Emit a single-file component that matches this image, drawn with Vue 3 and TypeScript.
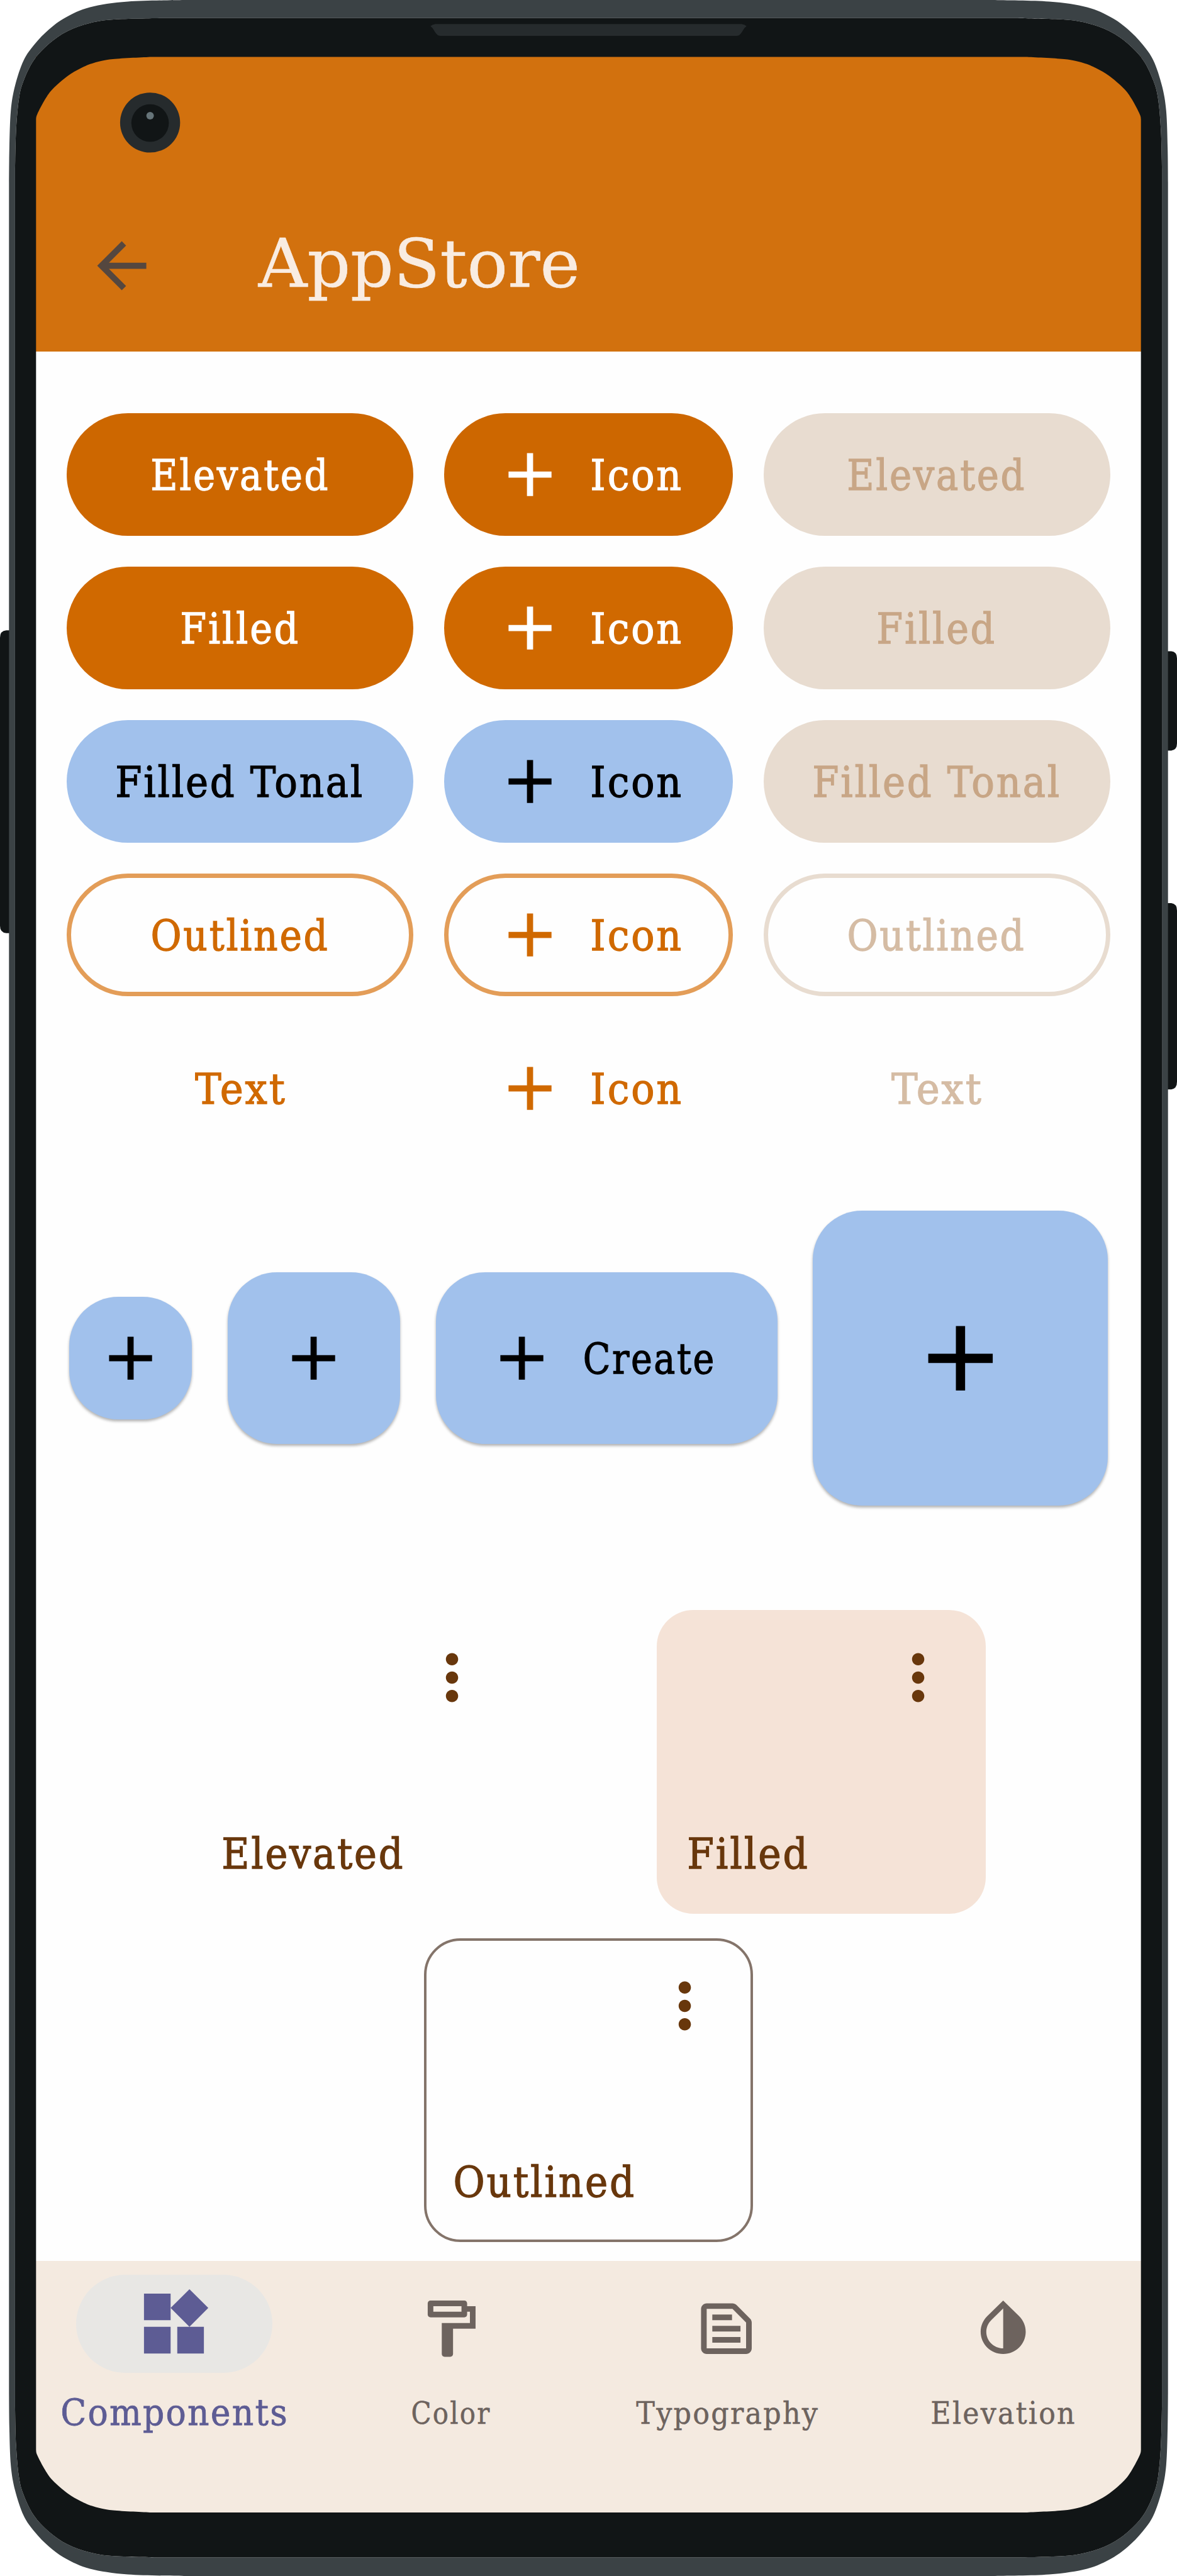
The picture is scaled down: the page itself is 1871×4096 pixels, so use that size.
<script setup lang="ts">
import { h, type FunctionalComponent } from 'vue'

interface LabelProps {
  text: string
  /** drawn width in px */
  w: number
  /** capital height in px */
  cap?: number
  size?: number
  /** extra stem thickness in px */
  bold?: number
  track?: number
}

// Side bearing of the first letter, in em.
const leading: Record<string, number> = { E: 0.055, F: 0.055, O: 0.052, C: 0.05, I: 0.055, T: 0.015, A: -0.008 }

// Text whose box is exactly its capital height, so flex centring is optical.
const Label: FunctionalComponent<LabelProps> = ({ text, w, cap = 48.6, size = 66.6, bold = 1.3, track = 3 }) => {
  const left = size * (leading[text[0]] ?? 0.05)
  const right = size * 0.03 + track
  return h('svg', { width: w, height: cap, style: { overflow: 'visible', display: 'block', flex: 'none' } }, [
    h('text', {
      x: -left,
      y: cap,
      textLength: w + left + right,
      lengthAdjust: 'spacingAndGlyphs',
      fill: 'currentColor',
      stroke: 'currentColor',
      'stroke-width': bold,
      'letter-spacing': track,
      'font-family': "'Roboto Slab', 'DejaVu Serif', serif",
      'font-size': size,
    }, text),
  ])
}
Label.props = ['text', 'w', 'cap', 'size', 'bold', 'track']

const Icon: FunctionalComponent<{ d: string; size?: number }> = ({ d, size = 117.1 }) =>
  h('svg', { width: size, height: size, viewBox: '0 0 24 24', style: { display: 'block', flex: 'none' } }, [
    h('path', { d, fill: 'currentColor' }),
  ])
Icon.props = ['d', 'size']

const icons = {
  back: 'M20 11H7.83l5.59-5.59L12 4l-8 8 8 8 1.41-1.41L7.83 13H20v-2z',
  add: 'M19 13h-6v6h-2v-6H5v-2h6V5h2v6h6v2z',
  more: 'M12 8c1.1 0 2-.9 2-2s-.9-2-2-2-2 .9-2 2 .9 2 2 2zm0 2c-1.1 0-2 .9-2 2s.9 2 2 2 2-.9 2-2-.9-2-2-2zm0 6c-1.1 0-2 .9-2 2s.9 2 2 2 2-.9 2-2-.9-2-2-2z',
  widgets: 'M13 13v8h8v-8h-8zM3 21h8v-8H3v8zM3 3v8h8V3H3zm13.66-1.31L11 7.34 16.66 13l5.66-5.66-5.66-5.65z',
  paint: 'M18 4V3c0-.55-.45-1-1-1H5c-.55 0-1 .45-1 1v4c0 .55.45 1 1 1h12c.55 0 1-.45 1-1V6h1v4H9v11c0 .55.45 1 1 1h2c.55 0 1-.45 1-1v-9h8V4h-3zm-2 2H6V4h10v2z',
  snippet: 'M14.17 5L19 9.83V19H5V5h9.17M14.17 3H5c-1.1 0-2 .9-2 2v14c0 1.1.9 2 2 2h14c1.1 0 2-.9 2-2V9.83c0-.53-.21-1.04-.59-1.41l-4.83-4.83c-.37-.38-.88-.59-1.41-.59zM7 15h10v2H7v-2zm0-4h10v2H7v-2zm0-4h7v2H7V7z',
  invert: 'M12 4.81V19c-3.31 0-6-2.63-6-5.87 0-1.56.62-3.03 1.75-4.14L12 4.81M12 2L6.35 7.56C4.9 8.99 4 10.96 4 13.13 4 17.48 7.58 21 12 21s8-3.52 8-7.87c0-2.17-.9-4.14-2.35-5.57L12 2z',
}

const rows = [
  { kind: 'elevated', text: 'Elevated', w: 276.2 },
  { kind: 'filled', text: 'Filled', w: 182 },
  { kind: 'tonal', text: 'Filled Tonal', w: 387 },
  { kind: 'outlined', text: 'Outlined', w: 275.6 },
  { kind: 'text', text: 'Text', w: 139.6 },
]

const cards = [
  { kind: 'elevated', text: 'Elevated', w: 282.2 },
  { kind: 'filled', text: 'Filled', w: 185.6 },
  { kind: 'outlined', text: 'Outlined', w: 282 },
]

const tabs = [
  { text: 'Components', icon: icons.widgets, w: 356, active: true },
  { text: 'Color', icon: icons.paint, w: 120.5, active: false },
  { text: 'Typography', icon: icons.snippet, w: 286.4, active: false },
  { text: 'Elevation', icon: icons.invert, w: 225, active: false },
]

type Pt = [number, number]

// Closed outline with four mirrored corners, each a Catmull-Rom curve through the offsets.
function outline(x0: number, y0: number, x1: number, y1: number, corner: Pt[]): string {
  const tl = corner.map(([x, y]): Pt => [x0 + x, y0 + y])
  const flip = (p: Pt[], fx: boolean, fy: boolean) =>
    p.map(([x, y]): Pt => [fx ? x0 + x1 - x : x, fy ? y0 + y1 - y : y])
  const parts = [tl, flip(tl, true, false).reverse(), flip(tl, true, true), flip(tl, false, true).reverse()]
  return parts.map((p, k) => {
    let d = `${k ? 'L' : 'M'}${p[0][0]} ${p[0][1]}`
    for (let i = 0; i < p.length - 1; i++) {
      const a = p[Math.max(i - 1, 0)], b = p[i], c = p[i + 1], e = p[Math.min(i + 2, p.length - 1)]
      d += `C${b[0] + (c[0] - a[0]) / 6} ${b[1] + (c[1] - a[1]) / 6} ${c[0] - (e[0] - b[0]) / 6} ${c[1] - (e[1] - b[1]) / 6} ${c[0]} ${c[1]}`
    }
    return d
  }).join('') + 'Z'
}

const shell = outline(14.3, 0, 1856.7, 4096, [[0, 290], [0.6, 235], [2.9, 176], [9.7, 136], [23.3, 96], [41, 70], [63.3, 47], [89.7, 28], [128.7, 11.5], [189, 2.5], [278, 0]])
const bezel = outline(23.9, 28.7, 1847.1, 4066.6, [[0, 240], [1.6, 180], [6.1, 129], [13.5, 100], [29.8, 67], [53.7, 41], [83, 21], [119, 8], [157, 2.3], [232, 0]])
const glass = outline(57.3, 90.4, 1813.7, 3995, [[0, 99.3], [2, 91], [14.3, 67.7], [26.5, 51], [50, 30.5], [71, 18], [92, 9.5], [122, 3.5], [183, 0]])
</script>

<template>
  <div class="stage">
    <div class="screen">
      <header class="appbar">
        <Icon :d="icons.back" class="back" />
        <Label class="title" text="AppStore" :w="508.9" :cap="77.2" :size="105.9" :bold="0.6" :track="0" />
      </header>

      <main class="body">
        <section class="buttons">
          <template v-for="r in rows" :key="r.kind">
            <div class="btn" :class="r.kind"><Label :text="r.text" :w="r.w" /></div>
            <div class="btn" :class="r.kind"><Icon :d="icons.add" /><Label class="after" text="Icon" :w="139" /></div>
            <div class="btn disabled" :class="r.kind"><Label :text="r.text" :w="r.w" /></div>
          </template>
        </section>

        <section class="fabs">
          <div class="fab small"><Icon :d="icons.add" /></div>
          <div class="fab"><Icon :d="icons.add" /></div>
          <div class="fab wide"><Icon :d="icons.add" /><Label class="after" text="Create" :w="203" /></div>
          <div class="fab large"><Icon :d="icons.add" :size="175.7" /></div>
        </section>

        <section class="cards">
          <article v-for="c in cards" :key="c.kind" class="card" :class="c.kind">
            <Icon :d="icons.more" class="more" />
            <Label :text="c.text" :w="c.w" />
          </article>
        </section>
      </main>

      <nav class="tabs">
        <div v-for="t in tabs" :key="t.text" class="tab" :class="{ active: t.active }">
          <div class="slot"><Icon :d="t.icon" :size="t.active ? 127 : 107.4" /></div>
          <Label
            :text="t.text"
            :w="t.w"
            :cap="t.active ? 41.6 : 34.8"
            :size="t.active ? 57.2 : 47.8"
            :bold="t.active ? 0.8 : 0.5"
            :track="2.4"
          />
        </div>
      </nav>
    </div>

    <svg class="device" width="1871" height="4096" viewBox="0 0 1871 4096">
      <g fill="#111516">
        <path d="M15 1002.3H10Q0 1003 0 1014V1472Q0 1483 10 1483.7H15z" />
        <path d="M1856 1035.6H1862Q1871 1036.500 1871 1047V1182Q1871 1192.500 1862 1193.500H1856z" />
        <path d="M1856 1436H1862Q1871 1437 1871 1448V1720Q1871 1731 1862 1732.300H1856z" />
      </g>
      <path :d="shell + bezel" fill="#3b4245" fill-rule="evenodd" />
      <path :d="bezel + glass" fill="#111516" fill-rule="evenodd" />
      <path d="M692 38.200H1179Q1184 39 1186.700 41.500C1181 46 1181 50 1177 54Q1175 57 1171 57H700Q696 57 694 54C690 50 690 46 684.300 41.500Q687 39 692 38.200z" fill="#262b2d" />
      <circle cx="238.600" cy="194.900" r="47.700" fill="#262b2d" />
      <circle cx="238.600" cy="195.600" r="29.800" fill="#111516" />
      <circle cx="238.600" cy="183.900" r="6" fill="#667479" />
    </svg>
  </div>
</template>

<style>
body {
  margin: 0;
  background: #fff;
}
</style>

<style scoped>
.stage {
  position: relative;
  width: 1871px;
  height: 4096px;
  overflow: hidden;
  font-family: 'Roboto Slab', 'DejaVu Serif', serif;
}
.device {
  position: absolute;
  inset: 0;
  display: block;
}
.screen {
  box-sizing: border-box;
  width: 1756.8px;
  height: 3906px;
  margin: 90px 57.1px 0;
  display: flex;
  flex-direction: column;
  background: #fefefe;
}
.stage::before {
  content: '';
  display: table;
}
.appbar {
  box-sizing: border-box;
  height: 469px;
  flex: none;
  display: flex;
  align-items: flex-end;
  padding: 0 0 78px 78px;
  background: #d2710e;
  color: #f9ece1;
}
.back {
  color: #55473f;
  margin-right: 157.7px;
}
.title {
  margin-bottom: 24.8px;
}
.body {
  flex: 1;
  padding-top: 97.8px;
}
.buttons {
  display: grid;
  grid-template-columns: 551.2px 458.8px 551.2px;
  grid-auto-rows: 195.2px;
  gap: 48.8px;
  justify-content: center;
}
.btn {
  box-sizing: border-box;
  display: flex;
  align-items: center;
  justify-content: center;
  border-radius: 97.6px;
}
.btn:nth-child(3n + 1),
.btn:nth-child(3n) {
  padding-right: 2px;
}
.btn:nth-child(3n + 2) {
  justify-content: flex-start;
  padding-left: 77.8px;
}
.after {
  margin-left: 41.3px;
}
.btn.elevated {
  background: #cd6700;
  color: #fff;
}
.btn.filled {
  background: #d06900;
  color: #fff;
}
.btn.tonal {
  background: #a1c1ec;
  color: #000;
}
.btn.outlined {
  border: 7.3px solid #e39d58;
  color: #d06900;
}
.btn.outlined:nth-child(3n + 2) {
  padding-left: 70.8px;
}
.btn.text {
  color: #d06900;
}
.btn.disabled {
  background: #e8dcd0;
  color: #c8a686;
}
.btn.disabled.outlined,
.btn.disabled.text {
  background: none;
  border-color: #e8dcd0;
  color: #d5bca4;
}
.fabs {
  display: flex;
  align-items: center;
  justify-content: space-between;
  height: 469px;
  margin-top: 97px;
  padding: 0 52.6px;
}
.fab {
  display: flex;
  align-items: center;
  justify-content: center;
  width: 274px;
  height: 273.5px;
  border-radius: 78px;
  background: #a1c1ec;
  color: #000;
  box-shadow: 0 3px 4px rgba(0, 0, 0, 0.3);
}
.fab.small {
  width: 195.6px;
  height: 195.6px;
}
.fab.wide {
  box-sizing: border-box;
  width: 543px;
  justify-content: flex-start;
  padding-left: 78.5px;
}
.fab.large {
  width: 469px;
  height: 469px;
}
.cards {
  display: flex;
  flex-wrap: wrap;
  justify-content: center;
  gap: 39px 218px;
  margin-top: 166.2px;
  padding: 0 240px;
}
.card {
  box-sizing: border-box;
  width: 522.2px;
  height: 483px;
  display: flex;
  flex-direction: column;
  justify-content: space-between;
  padding: 48.8px 49px 73px 51.8px;
  border-radius: 58px;
  color: #68370c;
}
.more {
  align-self: flex-end;
}
.card.filled {
  background: #f5e3d7;
}
.card.outlined {
  border: 4.5px solid #84746a;
  padding: 44.8px 45px 69px 46px;
}
.tabs {
  box-sizing: border-box;
  height: 401.5px;
  flex: none;
  display: flex;
  padding-top: 22.5px;
  background: #f4eae0;
  color: #6d635e;
}
.tab {
  flex: 1;
  display: flex;
  flex-direction: column;
  align-items: center;
}
.slot {
  box-sizing: border-box;
  width: 312px;
  height: 155.6px;
  margin-bottom: 46.4px;
  padding-top: 15px;
  display: flex;
  align-items: center;
  justify-content: center;
  border-radius: 78px;
}
.active {
  color: #5d5c94;
}
.active .slot {
  padding-top: 0;
  margin-bottom: 41px;
  background: #e8e7e4;
}
</style>
